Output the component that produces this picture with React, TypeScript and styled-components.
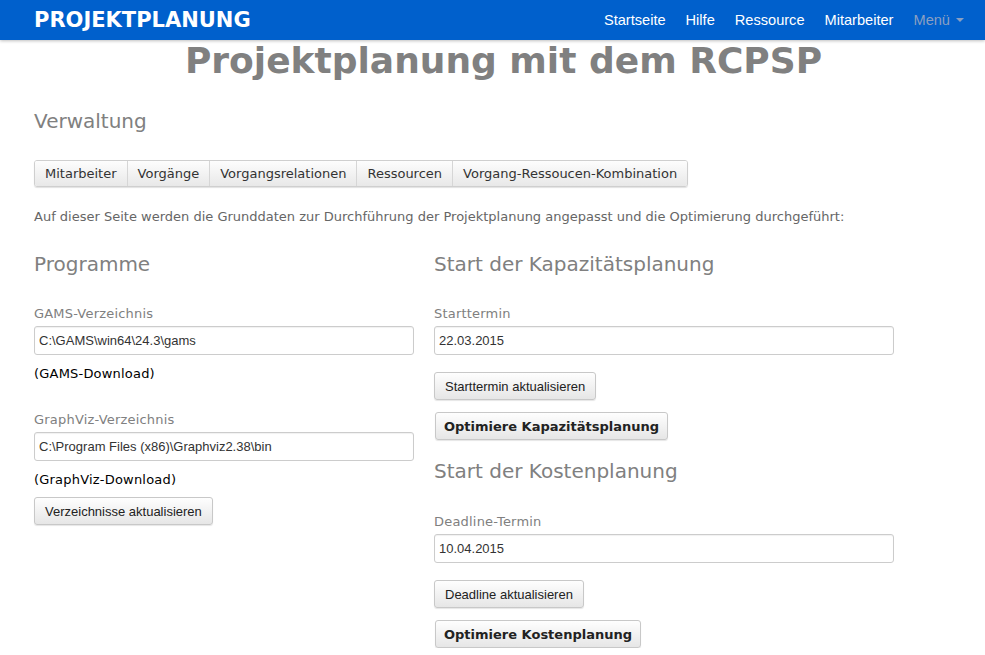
import React from "react";
import styled, { createGlobalStyle } from "styled-components";

const Global = createGlobalStyle`
  html, body { margin: 0; padding: 0; background: #fff; }
  body { font-family: "DejaVu Sans", Verdana, sans-serif; font-size: 13px; color: #333; }
  * { box-sizing: border-box; }
`;

const NavBar = styled.header`
  height: 40px;
  background: #0060cc;
  display: flex;
  align-items: center;
  justify-content: space-between;
  padding: 0 21px 0 34px;
  box-shadow: 0 1px 3px rgba(0,0,0,0.25);
`;

const Brand = styled.div`
  font-family: "DejaVu Sans", Verdana, sans-serif;
  font-weight: bold;
  font-size: 21px;
  color: #fff;
`;

const NavLinks = styled.nav`
  display: flex;
  align-items: center;
  gap: 20px;
  font-family: "Liberation Sans", Arial, sans-serif;
  font-size: 14.6px;
`;

const NavLink = styled.span<{ $muted?: boolean }>`
  color: ${(p) => (p.$muted ? "#8a9fc2" : "#fff")};
  display: flex;
  align-items: center;
  gap: 6px;
`;

const Caret = styled.span`
  width: 0;
  height: 0;
  border-left: 4px solid transparent;
  border-right: 4px solid transparent;
  border-top: 4px solid #8a9fc2;
`;

const Main = styled.main`
  padding: 0 34px;
`;

const Title = styled.h1`
  margin: 0;
  padding-left: 22px;
  text-align: center;
  font-family: "DejaVu Sans", Verdana, sans-serif;
  font-weight: bold;
  font-size: 36px;
  line-height: 42px;
  color: #808080;
`;

const SectionTitle = styled.h2<{ $top?: number }>`
  margin: ${(p) => p.$top ?? 0}px 0 0;
  font-family: "DejaVu Sans", Verdana, sans-serif;
  font-weight: normal;
  font-size: 20px;
  line-height: 26px;
  color: #808080;
`;

const ButtonGroup = styled.div`
  display: inline-flex;
  margin-top: 26px;
  border: 1px solid #cfcfcf;
  border-radius: 3px;
  box-shadow: 0 1px 1px rgba(0,0,0,0.12);
  overflow: hidden;
`;

const GroupButton = styled.button`
  font-family: "DejaVu Sans", Verdana, sans-serif;
  font-size: 13px;
  color: #333;
  height: 25px;
  padding: 0 10px;
  border: none;
  border-left: 1px solid #d6d6d6;
  background: linear-gradient(#fdfdfd, #e8e8e8);
  &:first-child { border-left: none; }
`;

const Intro = styled.p`
  margin: 21px 0 0;
  font-size: 13px;
  line-height: 18px;
  color: #666;
`;

const Columns = styled.div`
  display: grid;
  grid-template-columns: 380px 460px;
  column-gap: 20px;
  margin-top: 25px;
`;

const Column = styled.section`
  display: flex;
  flex-direction: column;
  align-items: flex-start;
`;

const Label = styled.label<{ $top: number }>`
  margin-top: ${(p) => p.$top}px;
  font-size: 13px;
  line-height: 16px;
  color: #808080;
  letter-spacing: 0.2px;
`;

const Input = styled.input`
  margin-top: 4px;
  width: 100%;
  height: 29px;
  border: 1px solid #cccccc;
  border-radius: 3px;
  padding: 0 4px;
  font-family: "Liberation Sans", Arial, sans-serif;
  font-size: 13px;
  color: #333;
  box-shadow: inset 0 1px 1px rgba(0,0,0,0.06);
`;

const LinkText = styled.div<{ $top: number }>`
  margin-top: ${(p) => p.$top}px;
  font-size: 13px;
  line-height: 16px;
  color: #000;
  letter-spacing: 0.2px;
`;

const Button = styled.button<{ $top: number; $bold?: boolean }>`
  margin-top: ${(p) => p.$top}px;
  margin-left: ${(p) => (p.$bold ? 1 : 0)}px;
  height: 28px;
  padding: 0 ${(p) => (p.$bold ? 8 : 10)}px;
  border: 1px solid #c8c8c8;
  border-radius: 3px;
  background: linear-gradient(#fefefe, #e6e6e6);
  box-shadow: 0 1px 1px rgba(0,0,0,0.1);
  color: #222;
  font-family: ${(p) => (p.$bold ? '"DejaVu Sans", Verdana, sans-serif' : '"Liberation Sans", Arial, sans-serif')};
  font-weight: ${(p) => (p.$bold ? "bold" : "normal")};
  font-size: 13px;
`;

export default function App() {
  return (
    <>
      <Global />
      <NavBar>
        <Brand>PROJEKTPLANUNG</Brand>
        <NavLinks>
          <NavLink>Startseite</NavLink>
          <NavLink>Hilfe</NavLink>
          <NavLink>Ressource</NavLink>
          <NavLink>Mitarbeiter</NavLink>
          <NavLink $muted>
            Menü <Caret />
          </NavLink>
        </NavLinks>
      </NavBar>
      <Main>
        <Title>Projektplanung mit dem RCPSP</Title>
        <SectionTitle $top={26}>Verwaltung</SectionTitle>
        <ButtonGroup>
          <GroupButton>Mitarbeiter</GroupButton>
          <GroupButton>Vorgänge</GroupButton>
          <GroupButton>Vorgangsrelationen</GroupButton>
          <GroupButton>Ressourcen</GroupButton>
          <GroupButton>Vorgang-Ressoucen-Kombination</GroupButton>
        </ButtonGroup>
        <Intro>
          Auf dieser Seite werden die Grunddaten zur Durchführung der Projektplanung angepasst und die Optimierung durchgeführt:
        </Intro>
        <Columns>
          <Column>
            <SectionTitle>Programme</SectionTitle>
            <Label $top={29}>GAMS-Verzeichnis</Label>
            <Input defaultValue={"C:\\GAMS\\win64\\24.3\\gams"} />
            <LinkText $top={11}>(GAMS-Download)</LinkText>
            <Label $top={30}>GraphViz-Verzeichnis</Label>
            <Input defaultValue={"C:\\Program Files (x86)\\Graphviz2.38\\bin"} />
            <LinkText $top={11}>(GraphViz-Download)</LinkText>
            <Button $top={9}>Verzeichnisse aktualisieren</Button>
          </Column>
          <Column>
            <SectionTitle>Start der Kapazitätsplanung</SectionTitle>
            <Label $top={29}>Starttermin</Label>
            <Input defaultValue="22.03.2015" />
            <Button $top={17}>Starttermin aktualisieren</Button>
            <Button $top={12} $bold>Optimiere Kapazitätsplanung</Button>
            <SectionTitle $top={18}>Start der Kostenplanung</SectionTitle>
            <Label $top={30}>Deadline-Termin</Label>
            <Input defaultValue="10.04.2015" />
            <Button $top={17}>Deadline aktualisieren</Button>
            <Button $top={12} $bold>Optimiere Kostenplanung</Button>
          </Column>
        </Columns>
      </Main>
    </>
  );
}
